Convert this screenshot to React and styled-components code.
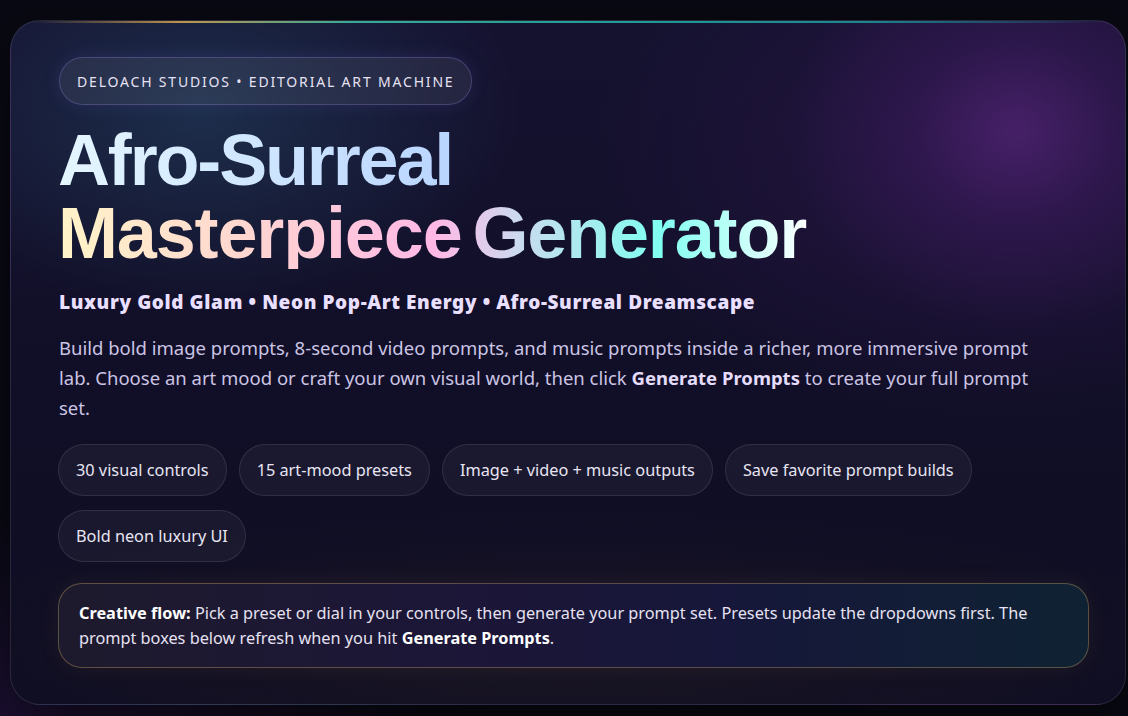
import React from "react";
import styled, { createGlobalStyle } from "styled-components";

const Global = createGlobalStyle`
  html, body { margin: 0; padding: 0; }
  body {
    background: radial-gradient(600px 300px at 0% 100%, #1c1033 0%, transparent 70%), #090913;
    font-family: "Noto Sans", "Open Sans", sans-serif;
    overflow: hidden;
  }
`;

const Page = styled.div`
  padding: 20px 2px 12px 10px;
  min-height: 716px;
  box-sizing: border-box;
`;

const Card = styled.section`
  position: relative;
  border: 1px solid rgba(255, 255, 255, 0.1);
  border-radius: 30px;
  padding: 36px 36px 36px 47px;
  overflow: hidden;
  background:
    radial-gradient(230px 200px at 1005px 110px, rgba(76, 34, 110, 0.85) 0%, rgba(60, 28, 95, 0.45) 45%, transparent 100%),
    radial-gradient(420px 260px at 1000px 140px, rgba(50, 22, 80, 0.6) 0%, transparent 100%),
    radial-gradient(320px 200px at 190px 90px, rgba(32, 56, 86, 0.75) 0%, transparent 100%),
    radial-gradient(700px 140px at 560px 630px, rgba(60, 45, 40, 0.25) 0%, transparent 100%),
    linear-gradient(180deg, #151230 0%, #110f27 55%, #0e0d22 100%);
  box-shadow: 0 20px 60px rgba(0, 0, 0, 0.5);
`;

const TopLine = styled.div`
  position: absolute;
  top: 0;
  left: 20px;
  right: 20px;
  height: 2px;
  background: linear-gradient(90deg, transparent 0%, #d9a84e 14%, #3cc3a7 30%, #1fb5ad 55%, #1a9ba0 78%, transparent 100%);
  opacity: 0.85;
`;

const Badge = styled.div`
  display: inline-flex;
  align-items: center;
  height: 48px;
  box-sizing: border-box;
  padding: 0 17px;
  border-radius: 999px;
  border: 1px solid rgba(160, 140, 230, 0.28);
  background: rgba(255, 255, 255, 0.065);
  box-shadow: 0 0 18px rgba(120, 100, 220, 0.15);
  color: #e6e2f4;
  font-size: 14px;
  letter-spacing: 0.13em;
  text-transform: uppercase;
  margin-left: 1px;
`;

const Title = styled.h1`
  margin: 19px 0 0 0;
  font-family: "Liberation Sans", Arial, sans-serif;
  font-weight: 700;
  font-size: 72px;
  line-height: 72.5px;
  word-spacing: -8px;
`;

const TitleLine = styled.span`
  display: inline-block;
  letter-spacing: ${(p) => p.$ls};
  background: ${(p) => p.$bg};
  -webkit-background-clip: text;
  background-clip: text;
  color: transparent;
  padding-right: 4px;
`;

const Tagline = styled.p`
  margin: 21px 0 0 1px;
  font-size: 19px;
  line-height: 25px;
  font-weight: 900;
  letter-spacing: 0.6px;
  color: #e9dfff;
`;

const Lead = styled.p`
  margin: 18px 0 0 1px;
  max-width: 985px;
  font-size: 18.5px;
  line-height: 30px;
  color: #cbc4e4;

  strong {
    color: #e4dcfb;
    font-weight: 700;
  }
`;

const Chips = styled.ul`
  list-style: none;
  padding: 0;
  margin: 21px 0 0 0;
  display: flex;
  flex-wrap: wrap;
  gap: 14px 12px;
`;

const Chip = styled.li`
  height: 52px;
  box-sizing: border-box;
  display: flex;
  align-items: center;
  padding: 0 17px;
  border-radius: 999px;
  border: 1px solid rgba(255, 255, 255, 0.1);
  background: rgba(255, 255, 255, 0.045);
  color: #e8e5f3;
  font-size: 16.3px;
`;

const Flow = styled.div`
  margin-top: 21px;
  padding: 17px 20px 16px 20px;
  border-radius: 24px;
  border: 1px solid rgba(205, 165, 100, 0.38);
  background: linear-gradient(90deg, #1e1a2d 0%, #1c1638 40%, #16173a 65%, #0f2233 100%);
  box-shadow: 0 0 22px rgba(200, 160, 90, 0.08);
  color: #e6e2f2;
  font-size: 16.3px;
  line-height: 25px;

  strong {
    color: #ffffff;
    font-weight: 700;
  }
`;

const chips = [
  "30 visual controls",
  "15 art-mood presets",
  "Image + video + music outputs",
  "Save favorite prompt builds",
  "Bold neon luxury UI",
];

export default function App() {
  return (
    <>
      <Global />
      <Page>
        <Card>
          <TopLine />
          <Badge>DeLoach Studios • Editorial Art Machine</Badge>
          <Title>
            <TitleLine
              $ls="-0.03em"
              $bg="linear-gradient(90deg, #e4f6ff 0%, #cfe6ff 50%, #b9d5ff 100%)"
            >
              Afro-Surreal
            </TitleLine>
            <br />
            <TitleLine
              $ls="-0.016em"
              $bg="linear-gradient(90deg, #fff4c8 0%, #ffd6d0 25%, #ffb8e6 50%, #c8dcef 62%, #80fff0 80%, #ffffff 100%)"
            >
              Masterpiece Generator
            </TitleLine>
          </Title>
          <Tagline>Luxury Gold Glam • Neon Pop-Art Energy • Afro-Surreal Dreamscape</Tagline>
          <Lead>
            Build bold image prompts, 8-second video prompts, and music prompts inside a richer, more
            immersive prompt lab. Choose an art mood or craft your own visual world, then click{" "}
            <strong>Generate Prompts</strong> to create your full prompt set.
          </Lead>
          <Chips>
            {chips.map((c) => (
              <Chip key={c}>{c}</Chip>
            ))}
          </Chips>
          <Flow>
            <strong>Creative flow:</strong> Pick a preset or dial in your controls, then generate your
            prompt set. Presets update the dropdowns first. The prompt boxes below refresh when you hit{" "}
            <strong>Generate Prompts</strong>.
          </Flow>
        </Card>
      </Page>
    </>
  );
}
